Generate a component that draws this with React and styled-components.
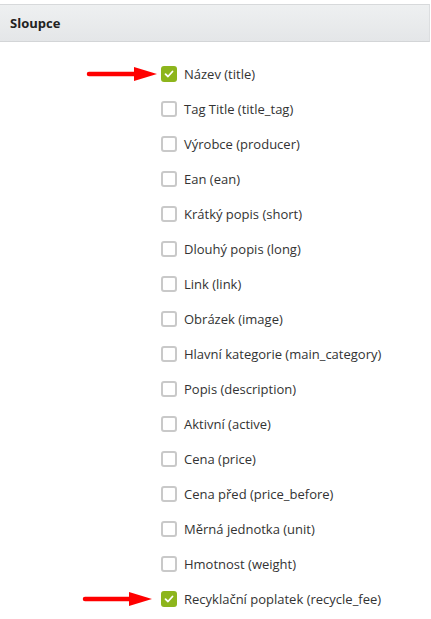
import React from "react";
import styled, { createGlobalStyle } from "styled-components";

const GlobalStyle = createGlobalStyle`
  body {
    margin: 0;
    background: #fff;
    font-family: "Open Sans", "Liberation Sans", sans-serif;
  }
`;

// arrow: the red marker pointing at a checked row (width and gap to the box)
const columns = [
  { label: "Název (title)", checked: true, arrow: { width: 71, gap: 4 } },
  { label: "Tag Title (title_tag)" },
  { label: "Výrobce (producer)" },
  { label: "Ean (ean)" },
  { label: "Krátký popis (short)" },
  { label: "Dlouhý popis (long)" },
  { label: "Link (link)" },
  { label: "Obrázek (image)" },
  { label: "Hlavní kategorie (main_category)" },
  { label: "Popis (description)" },
  { label: "Aktivní (active)" },
  { label: "Cena (price)" },
  { label: "Cena před (price_before)" },
  { label: "Měrná jednotka (unit)" },
  { label: "Hmotnost (weight)" },
  {
    label: "Recyklační poplatek (recycle_fee)",
    checked: true,
    arrow: { width: 70, gap: 9 },
  },
];

const Page = styled.div`
  width: 431px;
  padding-top: 4px;
`;

const Header = styled.div`
  width: 430px;
  height: 38px;
  box-sizing: border-box;
  display: flex;
  align-items: center;
  padding-left: 10px;
  border-top: 1px solid #d7d9db;
  border-bottom: 1px solid #d3d5d7;
  border-right: 1px solid #dcdee0;
  background: linear-gradient(#eef0f1, #e4e6e8);
  font-size: 13px;
  font-weight: 700;
  color: #222;
`;

const List = styled.div`
  display: flex;
  flex-direction: column;
  padding: 14px 0 0 78px;
`;

const Row = styled.label`
  display: flex;
  align-items: center;
  height: 35px;
  font-size: 13px;
  color: #333;
`;

const ArrowSlot = styled.div`
  width: 83px;
  height: 16px;
  display: flex;
  align-items: center;
  justify-content: flex-end;
  padding-right: ${(p) => p.gap || 0}px;
  box-sizing: border-box;
`;

const Box = styled.span`
  width: 16px;
  height: 16px;
  box-sizing: border-box;
  border-radius: 3px;
  margin-right: 7px;
  display: flex;
  align-items: center;
  justify-content: center;
  border: ${(p) => (p.checked ? "none" : "2px solid #c9c9c9")};
  background: ${(p) => (p.checked ? "#8db51c" : "#fff")};
`;

function Arrow({ width }) {
  const tip = width;
  const base = width - 23;
  return (
    <svg width={width} height="16" viewBox={`0 0 ${width} 16`}>
      <path d={`M3 8 H${base + 2}`} stroke="#f00" strokeWidth="4.5" strokeLinecap="round" />
      <path d={`M${base} 1 L${tip} 8 L${base} 15 Z`} fill="#f00" />
    </svg>
  );
}

function Check() {
  return (
    <svg width="10" height="8" viewBox="0 0 10 8">
      <path
        d="M1.5 4.2 L4 6.5 L8.5 1.5"
        fill="none"
        stroke="#fff"
        strokeWidth="1.8"
        strokeLinecap="round"
        strokeLinejoin="round"
      />
    </svg>
  );
}

export default function App() {
  return (
    <Page>
      <GlobalStyle />
      <Header>Sloupce</Header>
      <List>
        {columns.map((c) => (
          <Row key={c.label}>
            <ArrowSlot gap={c.arrow?.gap}>
              {c.arrow && <Arrow width={c.arrow.width} />}
            </ArrowSlot>
            <Box checked={c.checked}>{c.checked && <Check />}</Box>
            {c.label}
          </Row>
        ))}
      </List>
    </Page>
  );
}
